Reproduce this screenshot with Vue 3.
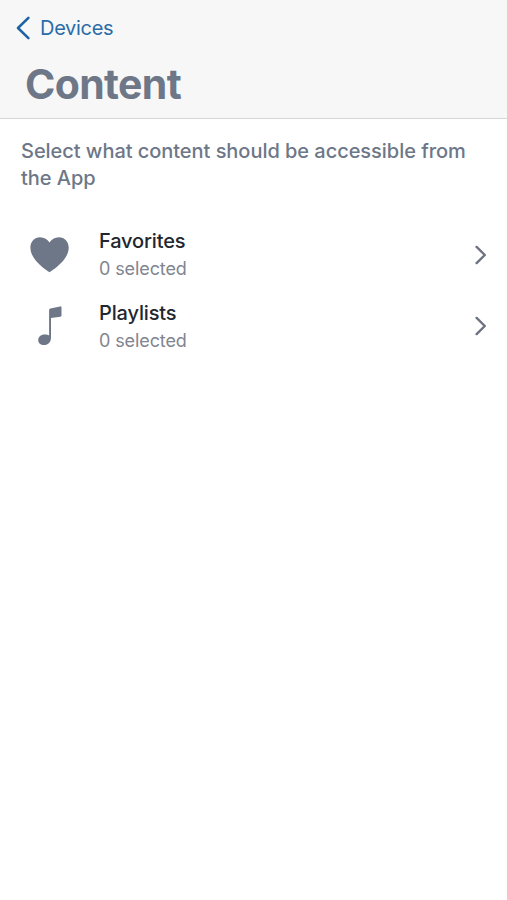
<script setup>
const items = [
  { id: 'favorites', title: 'Favorites', count: 0 },
  { id: 'playlists', title: 'Playlists', count: 0 },
]
</script>

<template>
  <div class="screen">
    <header class="header">
      <a class="back">
        <svg class="back-icon" width="16" height="26" viewBox="0 0 16 26">
          <path d="M13.4 2.9 3 13l10.400 10.100" />
        </svg>
        <span class="back-label">Devices</span>
      </a>
      <h1 class="title">Content</h1>
    </header>
    <main>
      <p class="intro">Select what content should be accessible from the App</p>
      <ul class="list">
        <li v-for="item in items" :key="item.id" class="row">
          <svg v-if="item.id === 'favorites'" class="icon" width="40" height="42" viewBox="0 0 40 42">
            <path d="M19.500 38.300C18.500 37.500 10.500 32.400 5.900 26.700C2.200 22.300.4 18 .4 13.600C.4 7.600 4.500 3.200 10 3.200C14.200 3.200 17.700 5.300 19.500 8.600C21.300 5.300 24.800 3.200 29 3.200C34.500 3.200 38.700 7.600 38.700 13.600C38.700 18 36.900 22.300 33.200 26.700C28.500 32.400 20.500 37.500 19.500 38.300Z" />
          </svg>
          <svg v-else class="icon" width="40" height="42" viewBox="0 0 40 42">
            <path d="M19.100 5.200Q19.100 3.800 20.400 3.500L30.200 1.400Q31.500 1.200 31.500 2.500V10.500Q31.500 11.500 30.400 11.700L21 13.100V32.500C21 37.300 18 40.100 14 40.100C10.600 40.100 8.200 38.100 8.200 35.300C8.200 31.900 10.900 29.600 14.500 29.600C16.600 29.600 18 29.900 19.100 30.600Z" />
          </svg>
          <div class="text">
            <span class="name">{{ item.title }}</span>
            <span class="count">{{ item.count }} selected</span>
          </div>
          <svg class="chevron" width="14" height="22" viewBox="0 0 14 22">
            <path d="M2.600 2.900 10.800 11l-8.200 8.100" />
          </svg>
        </li>
      </ul>
    </main>
  </div>
</template>

<style>
body {
  background: #fff;
}
</style>

<style scoped>
.screen {
  min-height: 900px;
  background: #fff;
  font-family: Inter, 'Liberation Sans', sans-serif;
  color: #6d7788;
}
.header {
  box-sizing: border-box;
  height: 119px;
  padding: 15px 16px 0 15px;
  background: #f7f7f7;
  border-bottom: 1px solid #d5d6d8;
}
.back {
  display: flex;
  align-items: center;
  height: 26px;
  color: #2b6ca8;
}
.back-icon path {
  fill: none;
  stroke: #1e64a5;
  stroke-width: 2.6;
  stroke-linecap: round;
  stroke-linejoin: round;
}
.back-label {
  margin-left: 9px;
  font-size: 20px;
  letter-spacing: -0.3px;
}
.title {
  margin: 19px 0 0 10px;
  font-size: 41px;
  line-height: 48px;
  font-weight: 700;
  letter-spacing: -0.65px;
}
.intro {
  margin: 0;
  padding: 19px 21px 0;
  font-size: 20px;
  line-height: 27px;
  font-weight: 500;
  letter-spacing: -0.04px;
}
.list {
  list-style: none;
  margin: 0;
  padding: 27px 19px 0 30px;
}
.row {
  display: flex;
  align-items: center;
  height: 71.5px;
}
.icon {
  flex: none;
  fill: #6d7788;
}
.text {
  display: flex;
  flex: 1;
  flex-direction: column;
  margin-left: 29px;
  padding-top: 1px;
}
.name {
  font-size: 20px;
  line-height: 28px;
  font-weight: 500;
  letter-spacing: -0.15px;
  color: #22262e;
}
.count {
  font-size: 18px;
  line-height: 28px;
  letter-spacing: -0.1px;
  color: #7f8591;
}
.chevron path {
  fill: none;
  stroke: #6c7280;
  stroke-width: 2.4;
  stroke-linecap: round;
  stroke-linejoin: round;
}
</style>
